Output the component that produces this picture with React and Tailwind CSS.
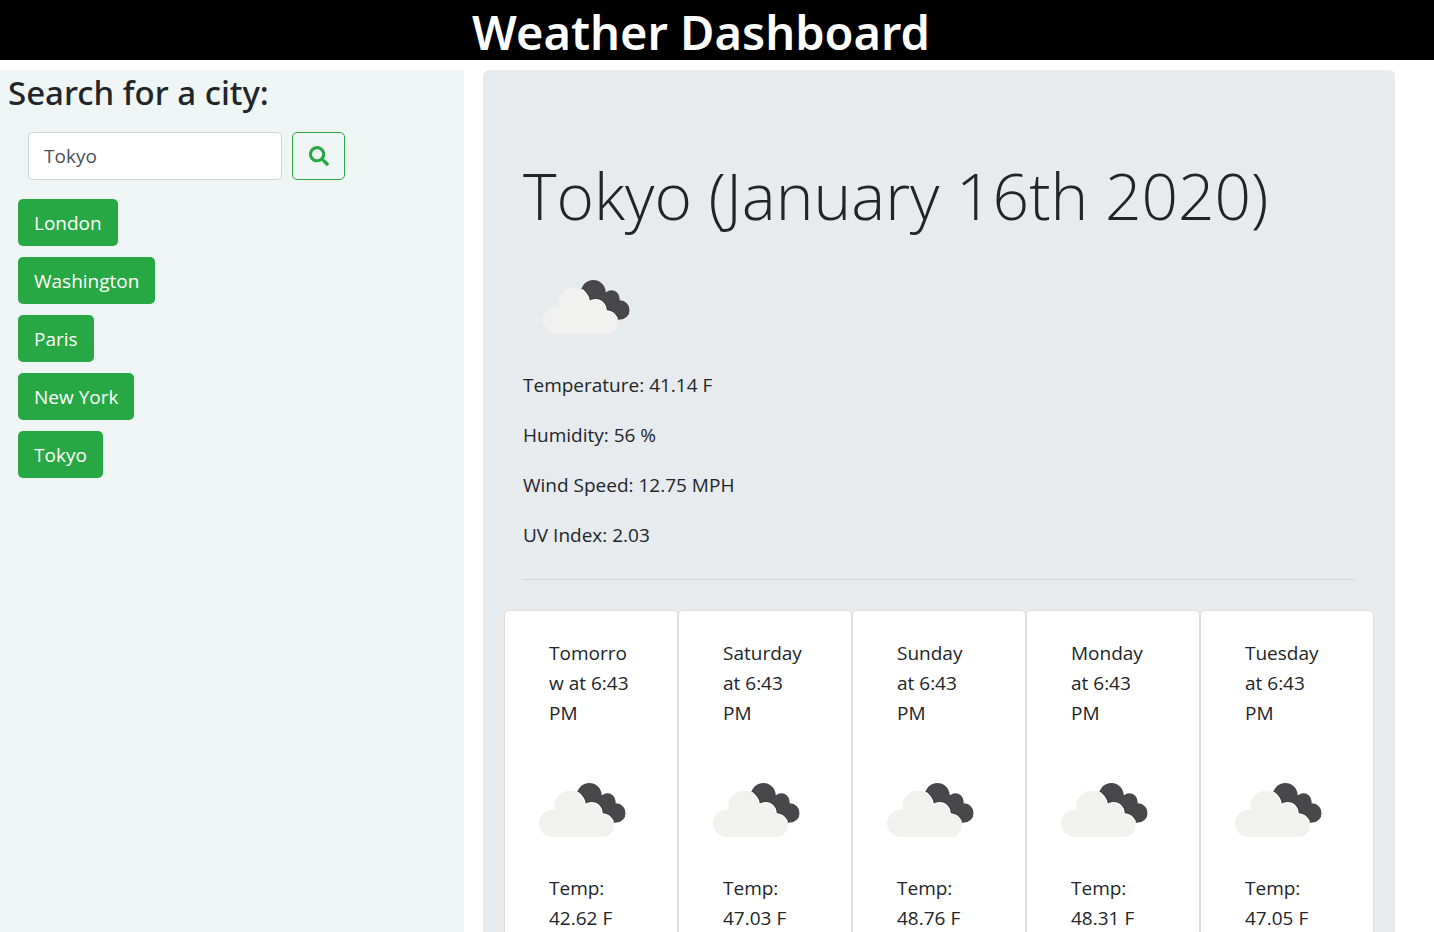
import React, { useState } from "react";
import { FaSearch } from "react-icons/fa";

const cities = ["London", "Washington", "Paris", "New York", "Tokyo"];

const conditions = [
  "Temperature: 41.14 F",
  "Humidity: 56 %",
  "Wind Speed: 12.75 MPH",
  "UV Index: 2.03",
];

const forecast = [
  { when: "Tomorrow at 6:43 PM", temp: "42.62 F" },
  { when: "Saturday at 6:43 PM", temp: "47.03 F" },
  { when: "Sunday at 6:43 PM", temp: "48.76 F" },
  { when: "Monday at 6:43 PM", temp: "48.31 F" },
  { when: "Tuesday at 6:43 PM", temp: "47.05 F" },
];

function LightCloud() {
  return (
    <>
      <circle cx="65" cy="151" r="41" />
      <circle cx="116" cy="99" r="46" />
      <circle cx="182" cy="120" r="30" />
      <circle cx="214" cy="158" r="34" />
      <rect x="65" y="124" width="149" height="68" />
      <rect x="72" y="108" width="90" height="40" />
    </>
  );
}

function BrokenClouds() {
  return (
    <svg
      role="img"
      aria-label="Broken clouds"
      viewBox="-36 -75 375 375"
      className="block h-[125px] w-[125px]"
    >
      <defs>
        <clipPath id="dark-cloud">
          <circle cx="175" cy="67" r="37" />
          <circle cx="229" cy="86" r="25" />
          <circle cx="255" cy="120" r="29" />
          <path d="M150 60 L212 66 L252 92 L255 149 L150 149 Z" />
        </clipPath>
      </defs>
      <g clipPath="url(#dark-cloud)">
        <rect x="130" y="25" width="160" height="128" fill="#48484a" />
        <g fill="#363638" stroke="#363638" strokeWidth="11">
          <LightCloud />
        </g>
        <g fill="#fff" stroke="#fff" strokeWidth="6">
          <LightCloud />
        </g>
      </g>
      <g fill="#f1f1f0">
        <LightCloud />
      </g>
    </svg>
  );
}

function Sidebar() {
  const [query, setQuery] = useState("Tokyo");
  return (
    <aside className="bg-[#eff5f5] pb-5">
      <h2 className="px-2 font-['Noto_Sans',sans-serif] text-[33px] leading-[46px] font-medium">
        Search for a city:
      </h2>
      <form
        className="flex gap-[10px] px-7 pt-4"
        onSubmit={(event) => event.preventDefault()}
      >
        <input
          type="search"
          aria-label="City"
          value={query}
          onChange={(event) => setQuery(event.target.value)}
          className="h-12 w-[254px] rounded-[5px] border border-[#ced4da] bg-white px-[15px] text-[#495057] outline-none"
        />
        <button
          type="submit"
          aria-label="Search"
          className="flex h-12 w-[53px] items-center justify-center rounded-[5px] border border-[#28a745] text-[#28a745]"
        >
          <FaSearch className="h-5 w-5" />
        </button>
      </form>
      <div className="flex flex-col items-start gap-[11px] px-[18px] pt-[19px]">
        {cities.map((city) => (
          <button
            key={city}
            type="button"
            className="h-[47px] rounded-[5px] bg-[#28a745] px-4 text-white"
          >
            {city}
          </button>
        ))}
      </div>
    </aside>
  );
}

export default function App() {
  return (
    <div className="flex h-screen flex-col gap-[10px] bg-white font-['Open_Sans',sans-serif] text-[19px] leading-[30px] text-[#212529]">
      <header className="bg-black pt-1 pr-8 text-center text-white">
        <h1 className="font-['Noto_Sans',sans-serif] text-[47px] leading-[56px] font-semibold">
          Weather Dashboard
        </h1>
      </header>
      <div className="grid min-h-0 flex-1 grid-cols-[464fr_912fr] gap-[19px] overflow-hidden pr-[39px]">
        <Sidebar />
        <main className="rounded-[6px] bg-[#e7ebee] pt-[84px] pb-10">
          <section className="px-10">
            <h2 className="mb-[7px] text-[64px] leading-[84px] font-light">
              Tokyo (January 16th 2020)
            </h2>
            <BrokenClouds />
            <div className="flex flex-col gap-5">
              {conditions.map((line) => (
                <p key={line}>{line}</p>
              ))}
            </div>
            <hr className="mt-[29px] mb-[30px] border-[#cfd3d6]" />
          </section>
          <section className="grid grid-cols-5 px-[21px]">
            {forecast.map((day) => (
              <article
                key={day.when}
                className="rounded-[5px] border border-[#dfdfdf] bg-white pt-[27px]"
              >
                <p className="px-11 break-words">{day.when}</p>
                <div className="px-[14px] pt-5">
                  <BrokenClouds />
                </div>
                <p className="px-11 pb-7">Temp: {day.temp}</p>
              </article>
            ))}
          </section>
        </main>
      </div>
    </div>
  );
}
